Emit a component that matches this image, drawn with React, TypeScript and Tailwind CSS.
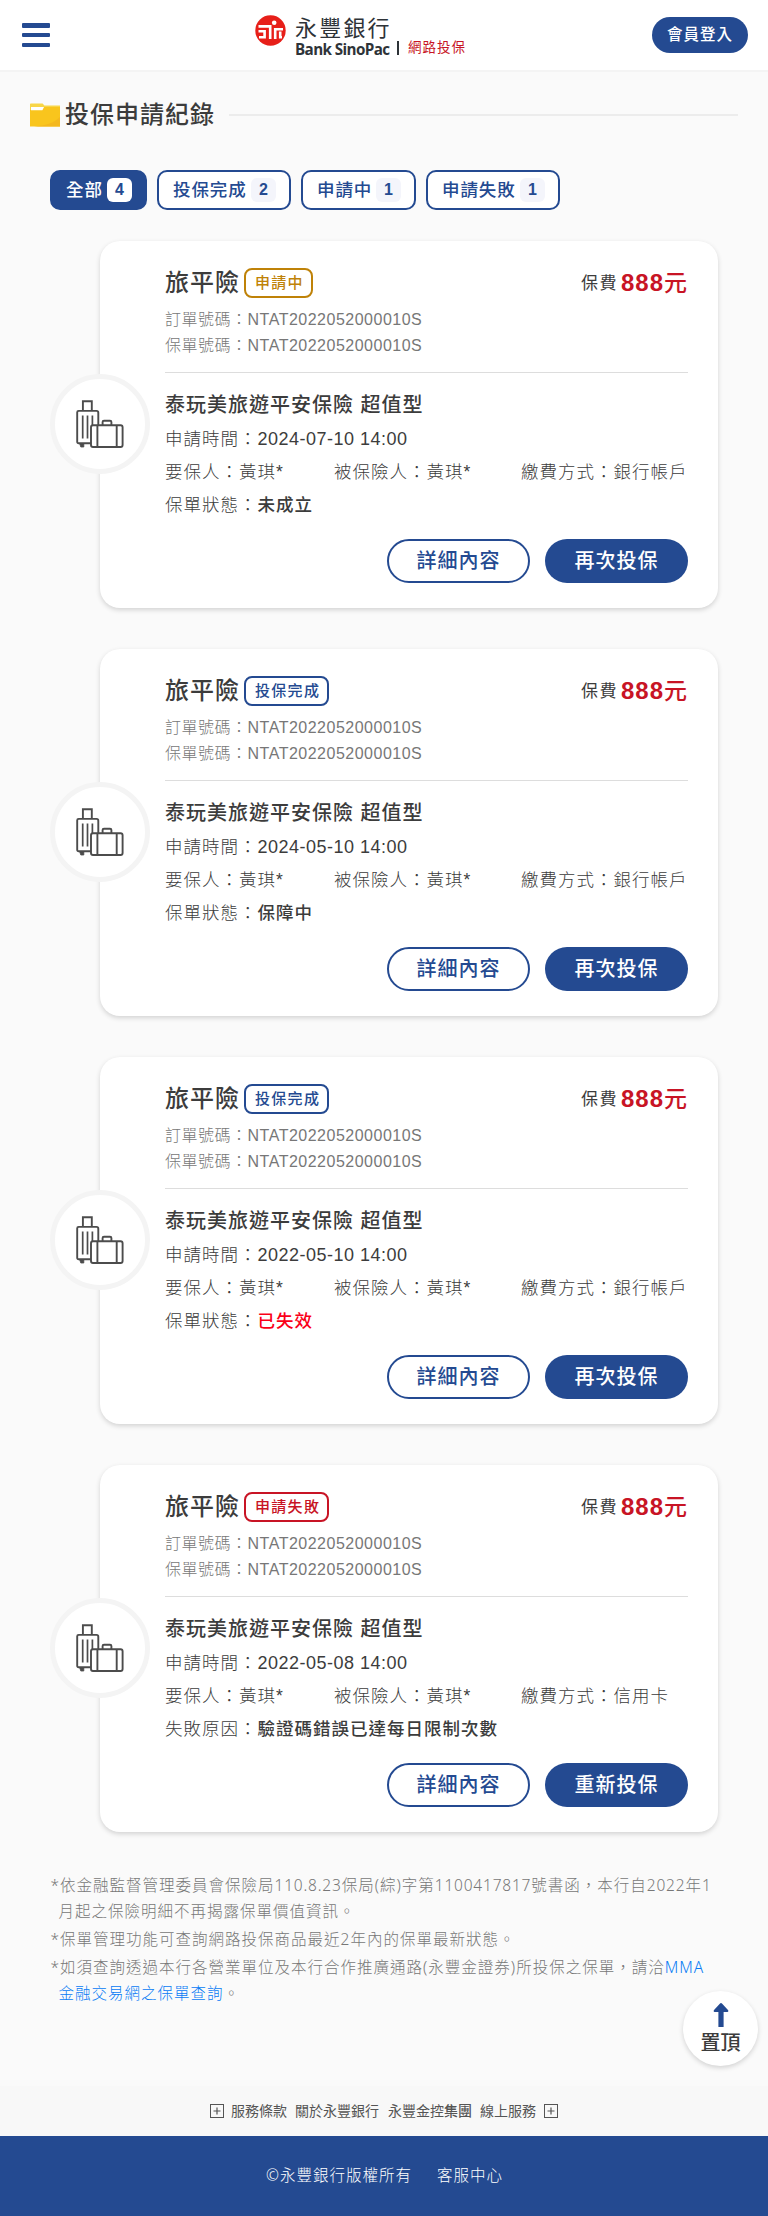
import React from "react";

type Tone = "pending" | "done" | "failed";

interface RecordItem {
  tone: Tone;
  badge: string;
  time: string;
  payment: string;
  statusLabel: string;
  status: string;
  expired?: boolean;
  action: string;
}

const records: RecordItem[] = [
  { tone: "pending", badge: "申請中", time: "2024-07-10 14:00", payment: "銀行帳戶", statusLabel: "保單狀態", status: "未成立", action: "再次投保" },
  { tone: "done", badge: "投保完成", time: "2024-05-10 14:00", payment: "銀行帳戶", statusLabel: "保單狀態", status: "保障中", action: "再次投保" },
  { tone: "done", badge: "投保完成", time: "2022-05-10 14:00", payment: "銀行帳戶", statusLabel: "保單狀態", status: "已失效", expired: true, action: "再次投保" },
  { tone: "failed", badge: "申請失敗", time: "2022-05-08 14:00", payment: "信用卡", statusLabel: "失敗原因", status: "驗證碼錯誤已達每日限制次數", action: "重新投保" },
];

const toneClass: Record<Tone, string> = {
  pending: "border-[#bf8208] text-[#bf8208]",
  done: "border-[#244a91] text-[#244a91]",
  failed: "border-[#c81425] text-[#c81425]",
};

const tabs = [
  { label: "全部", count: 4, active: true, width: "w-[97px]" },
  { label: "投保完成", count: 2, active: false, width: "w-[134px]" },
  { label: "申請中", count: 1, active: false, width: "w-[115px]" },
  { label: "申請失敗", count: 1, active: false, width: "w-[134px]" },
];

function LogoMark() {
  return (
    <svg width="31" height="31" viewBox="0 0 31 31" className="mt-[15px] shrink-0">
      <circle cx="15.5" cy="15.5" r="15.2" fill="#e71f19" />
      <g stroke="#fff" strokeWidth="2.6" fill="none">
        <path d="M3.5 11.4H15.2V24" />
        <path d="M4 22.3H9.6V16.2H3.5" />
        <path d="M20.2 24V14.2H28" />
        <path d="M25.2 16.5V22.3H27" />
      </g>
      <circle cx="19.2" cy="7.8" r="2.3" fill="#fff" />
    </svg>
  );
}

function FolderIcon() {
  return (
    <svg width="30" height="24" viewBox="0 0 30 24">
      <path d="M0 1Q0 .4.8.4H12.6L14.4 2.6H30V9H0Z" fill="#f8d648" />
      <path d="M14 4H30V23.6H0V7H12Z" fill="#f9c51d" />
      <path d="M1 4H14L12.4 7.2H1Z" fill="#fff" />
      <path d="M30 14V23.6H4C15 22.5 24 20 30 14Z" fill="#f4b81f" />
    </svg>
  );
}

function LuggageIcon() {
  return (
    <svg width="48" height="48" viewBox="0 0 48 48" fill="none" stroke="#4c4c4c" strokeWidth="1.9">
      <path d="M6.9 10.5V1.2H15.8V10.5" />
      <path d="M15 43.3H2.7Q1.2 43.3 1.2 41.8V12.3Q1.2 10.9 2.7 10.9H20.5Q22.3 10.9 22.3 12.7V25" />
      <path d="M6.7 15.5V38.5M11.5 15.5V38.5M16.4 15.5V25" strokeWidth="1.7" />
      <path d="M3.8 44H7.8V47H4.8Z" fill="#4c4c4c" strokeWidth=".8" />
      <rect x="15" y="25.3" width="31.6" height="21.7" rx="2" />
      <path d="M26.6 25V22.1Q26.6 20.8 28 20.8H34Q35.4 20.8 35.4 22.1V25M21.4 25.3V47M40.7 25.3V47" />
    </svg>
  );
}

function PlusBox() {
  return (
    <svg width="14" height="14" viewBox="0 0 14 14" fill="none" stroke="#555" strokeWidth="1">
      <rect x=".5" y=".5" width="13" height="13" />
      <path d="M3.5 7H10.5M7 3.5V10.5" strokeWidth="1.2" />
    </svg>
  );
}

function Card({ r }: { r: RecordItem }) {
  return (
    <article className="relative h-[367px] w-[618px] rounded-[20px] bg-white pl-[65px] pr-[30px] pt-[27px] shadow-[0_2px_5px_rgba(0,0,0,0.16)]">
      <div className="absolute -left-[50px] top-[133px] flex h-[100px] w-[100px] items-center justify-center rounded-full border-[5px] border-[#f4f4f4] bg-white">
        <LuggageIcon />
      </div>
      <div className="flex h-[30px] items-center justify-between whitespace-nowrap">
        <div className="flex items-center">
          <h2 className="w-[79px] text-[24px] font-medium leading-[30px] tracking-[1px]">旅平險</h2>
          <span className={`flex h-[30px] items-center rounded-[8px] border-2 pl-[9px] pr-[7px] text-[15px] font-medium tracking-[1.3px] ${toneClass[r.tone]}`}>
            {r.badge}
          </span>
        </div>
        <div className="flex items-center">
          <span className="mr-[3px] pt-px text-[17px] tracking-[1.5px]">保費</span>
          <span className="text-[24px] font-bold leading-[30px] tracking-[1px] text-[#c81425]">888</span>
          <span className="text-[23px] font-medium leading-[30px] tracking-[1px] text-[#c81425]">元</span>
        </div>
      </div>
      <div className="mt-[9px] border-b border-[#ddd] pb-[13px] text-[16px] font-light leading-[26px] tracking-[0.5px] text-[#777]">
        <p>訂單號碼：<span className="font-normal">NTAT2022052000010S</span></p>
        <p>保單號碼：<span className="font-normal">NTAT2022052000010S</span></p>
      </div>
      <h3 className="mt-[16px] h-[34px] text-[20px] font-medium leading-[32px] tracking-[1px]">泰玩美旅遊平安保險 超值型</h3>
      <div className="text-[17.5px] font-light leading-[33px] tracking-[1px]">
        <p>申請時間：<span className="text-[18px] font-normal tracking-[0.5px]">{r.time}</span></p>
        <div className="flex whitespace-nowrap">
          <span className="w-[169px]">要保人：黃琪*</span>
          <span className="w-[187px]">被保險人：黃琪*</span>
          <span>繳費方式：{r.payment}</span>
        </div>
        <p>
          {r.statusLabel}：
          <span className={r.expired ? "font-medium text-[#fa0019]" : "font-medium"}>{r.status}</span>
        </p>
      </div>
      <div className="mt-[17px] flex justify-end gap-[15px] text-[20px] font-medium tracking-[1px]">
        <button className="h-[44px] w-[143px] rounded-full border-2 border-[#244a91] bg-white text-[#244a91]">詳細內容</button>
        <button className="h-[44px] w-[143px] rounded-full bg-[#244a91] text-white">{r.action}</button>
      </div>
    </article>
  );
}

export default function App() {
  return (
    <div className="relative flex h-[2216px] w-[768px] flex-col overflow-hidden bg-[#fafafa] font-['Liberation_Sans','Noto_Sans_CJK_TC',sans-serif] text-[#3c3c3c]">
      <header className="flex h-[72px] shrink-0 border-b-2 border-[#f4f4f4] bg-white">
        <button className="ml-[22px] mt-[23px] flex h-[24px] w-[28px] flex-col justify-between" aria-label="選單">
          <span className="h-[4.5px] w-full rounded-[1px] bg-[#244a91]" />
          <span className="h-[4.5px] w-full rounded-[1px] bg-[#244a91]" />
          <span className="h-[4.5px] w-full rounded-[1px] bg-[#244a91]" />
        </button>
        <div className="ml-[205px] flex w-[397px] items-start whitespace-nowrap">
          <LogoMark />
          <div className="ml-[9px] mt-[15px] w-[95px] text-[#2e3338]">
            <div className="h-[25px] text-[22px] leading-[28px] tracking-[2.2px]">永豐銀行</div>
            <div className="font-['Open_Sans','Noto_Sans',sans-serif] text-[15.2px] font-bold leading-[18px] tracking-[-0.6px]">Bank SinoPac</div>
          </div>
          <div className="ml-[7px] mt-[41px] h-[14px] w-[2px] bg-[#2e3338]" />
          <div className="ml-[9px] mt-[38px] text-[13.5px] leading-[20px] tracking-[1px] text-[#c81425]">網路投保</div>
        </div>
        <button className="mt-[17px] h-[36px] w-[96px] rounded-full bg-[#244a91] pb-px text-[15.5px] font-medium leading-none tracking-[1px] text-white">會員登入</button>
      </header>

      <div className="mt-[23px] flex h-[40px] shrink-0 items-center pl-[30px] pr-[30px]">
        <FolderIcon />
        <h1 className="ml-[5px] w-[164px] text-[24px] font-medium leading-[40px] tracking-[1px]">投保申請紀錄</h1>
        <div className="h-[2px] flex-1 bg-[#ececec]" />
      </div>

      <nav className="mt-[35px] flex h-[40px] shrink-0 gap-[10px] pl-[50px]">
        {tabs.map((t) => (
          <button
            key={t.label}
            className={`flex items-center justify-between whitespace-nowrap rounded-[10px] border-2 border-[#244a91] pl-[14px] pr-[13px] text-[17.5px] font-medium tracking-[0.9px] ${t.width} ${t.active ? "bg-[#244a91] text-white" : "bg-white text-[#244a91]"}`}
          >
            <span>{t.label}</span>
            <span className={`flex h-[24px] w-[25px] items-center justify-center rounded-[6px] text-[16px] font-bold leading-none tracking-normal text-[#244a91] ${t.active ? "bg-white" : "bg-[#f4f5fb]"}`}>
              {t.count}
            </span>
          </button>
        ))}
      </nav>

      <main className="mt-[31px] flex shrink-0 flex-col gap-[41px] pl-[100px]">
        {records.map((r) => (
          <Card key={r.time} r={r} />
        ))}
      </main>

      <ul className="mt-[40px] flex flex-col gap-[2px] whitespace-nowrap pl-[58.5px] font-['Noto_Sans','Noto_Sans_CJK_TC',sans-serif] text-[15.5px] font-light leading-[26px] tracking-[1px] text-[#777]">
        <li className="-indent-[8px]">
          <p>
            *依金融監督管理委員會保險局<span className="tracking-[0.8px]">110.8.23</span>保局(綜)字第
            <span className="tracking-[0.8px]">1100417817</span>號書函，本行自<span className="tracking-[0.8px]">2022</span>年1
          </p>
          <p className="indent-0">月起之保險明細不再揭露保單價值資訊。</p>
        </li>
        <li className="-indent-[8px]">*保單管理功能可查詢網路投保商品最近2年內的保單最新狀態。</li>
        <li className="-indent-[8px]">
          <p>*如須查詢透過本行各營業單位及本行合作推廣通路(永豐金證券)所投保之保單，請洽<a className="text-[#087bf5]">MMA</a></p>
          <p className="indent-0"><a className="text-[#087bf5]">金融交易網之保單查詢</a>。</p>
        </li>
      </ul>

      <footer className="mt-auto shrink-0">
        <div className="flex h-[50px] items-center bg-[#f8f8f8] pl-[210px] text-[14px] leading-none text-[#555]">
          <PlusBox />
          <span className="ml-[7px] w-[64px]">服務條款</span>
          <span className="w-[93px]">關於永豐銀行</span>
          <span className="w-[92px]">永豐金控<span className="font-medium">集團</span></span>
          <span className="w-[64px]">線上服務</span>
          <PlusBox />
        </div>
        <div className="flex h-[80px] items-center bg-[#244a91] pl-[266px] font-['Noto_Sans','Noto_Sans_CJK_TC',sans-serif] text-[15.5px] font-light tracking-[1px] text-white">
          <span className="w-[171px]">©永豐銀行版權所有</span>
          <span>客服中心</span>
        </div>
      </footer>

      <button className="absolute left-[683px] top-[1991px] flex h-[75px] w-[75px] flex-col items-center rounded-full bg-white pt-[12px] shadow-[0_2px_5px_rgba(0,0,0,0.16)]">
        <svg width="16" height="24" viewBox="0 0 16 24" fill="#244a91">
          <path d="M8 0Q8.6 0 9.2.7L15.2 7.3Q15.8 8.8 14.5 9H10.6V24H5.4V9H1.5Q.2 8.8.8 7.3L6.8.7Q7.4 0 8 0Z" />
        </svg>
        <span className="mt-[2px] text-[20px] font-medium leading-[28px]">置頂</span>
      </button>
    </div>
  );
}
